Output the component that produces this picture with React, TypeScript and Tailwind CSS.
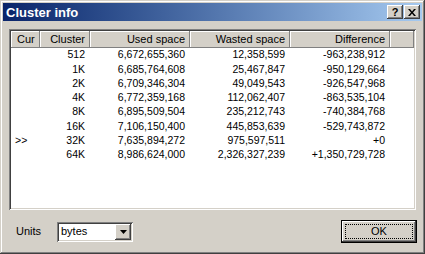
const rows = [
  { cur: "", cluster: "512", used: "6,672,655,360", wasted: "12,358,599", diff: "-963,238,912" },
  { cur: "", cluster: "1K", used: "6,685,764,608", wasted: "25,467,847", diff: "-950,129,664" },
  { cur: "", cluster: "2K", used: "6,709,346,304", wasted: "49,049,543", diff: "-926,547,968" },
  { cur: "", cluster: "4K", used: "6,772,359,168", wasted: "112,062,407", diff: "-863,535,104" },
  { cur: "", cluster: "8K", used: "6,895,509,504", wasted: "235,212,743", diff: "-740,384,768" },
  { cur: "", cluster: "16K", used: "7,106,150,400", wasted: "445,853,639", diff: "-529,743,872" },
  { cur: ">>", cluster: "32K", used: "7,635,894,272", wasted: "975,597,511", diff: "+0" },
  { cur: "", cluster: "64K", used: "8,986,624,000", wasted: "2,326,327,239", diff: "+1,350,729,728" },
];

const raised =
  "shadow-[inset_-1px_-1px_#404040,inset_1px_1px_#ffffff,inset_-2px_-2px_#808080,inset_2px_2px_#d4d0c8]";

const HeaderCell = ({ w, label, left }: { w: string; label: string; left?: boolean }) => (
  <div
    className={`${w} h-full flex items-center ${left ? "justify-start pl-[6px]" : "justify-end pr-[5px]"} bg-[#d4d0c8] shadow-[inset_-1px_-1px_#808080,inset_1px_1px_#ffffff]`}
  >
    {label}
  </div>
);

const App = () => {
  return (
    <div
      className="w-[425px] h-[254px] bg-[#d4d0c8] p-[3px] flex flex-col shadow-[inset_-1px_-1px_#404040,inset_1px_1px_#d4d0c8,inset_-2px_-2px_#808080,inset_2px_2px_#ffffff] text-black"
      style={{ fontFamily: '"Liberation Sans", Arial, sans-serif' }}
    >
      {/* title bar */}
      <div className="h-[18px] flex items-center justify-between pl-[3px] pr-[2px] bg-gradient-to-r from-[#0a246a] to-[#a6caf0]">
        <div className="text-white font-bold text-[13px] leading-none">Cluster info</div>
        <div className="flex gap-[1px]">
          <div className={`w-[16px] h-[14px] bg-[#d4d0c8] ${raised} flex items-center justify-center text-[11px] font-bold leading-none`}>
            ?
          </div>
          <div className={`w-[16px] h-[14px] bg-[#d4d0c8] ${raised} flex items-center justify-center`}>
            <svg width="8" height="7" viewBox="0 0 8 7">
              <path d="M0 0h2l2 2.5L6 0h2L5 3.5 8 7H6L4 4.5 2 7H0l3-3.5z" fill="#000" />
            </svg>
          </div>
        </div>
      </div>

      {/* list view */}
      <div className="mt-[8px] ml-[6px] w-[407px] h-[181px] bg-white p-[2px] shadow-[inset_1px_1px_#808080,inset_-1px_-1px_#ffffff,inset_2px_2px_#404040,inset_-2px_-2px_#d4d0c8] flex flex-col text-[11px]">
        <div className="h-[17px] flex shrink-0">
          <HeaderCell w="w-[29px]" label="Cur" left />
          <HeaderCell w="w-[50px]" label="Cluster" />
          <HeaderCell w="w-[100px]" label="Used space" />
          <HeaderCell w="w-[100px]" label="Wasted space" />
          <HeaderCell w="w-[100px]" label="Difference" />
          <HeaderCell w="flex-1" label="" />
        </div>
        <div className="flex flex-col text-[10.5px]">
          {rows.map((r) => (
            <div key={r.cluster} className="h-[14.3px] flex items-center">
              <div className="w-[29px] pl-[4px]">{r.cur}</div>
              <div className="w-[50px] text-right pr-[5px]">{r.cluster}</div>
              <div className="w-[100px] text-right pr-[5px]">{r.used}</div>
              <div className="w-[100px] text-right pr-[5px]">{r.wasted}</div>
              <div className="w-[100px] text-right pr-[5px]">{r.diff}</div>
            </div>
          ))}
        </div>
      </div>

      {/* bottom row */}
      <div className="flex items-center mt-[10px] ml-[13px]">
        <div className="text-[11px] w-[41px]">Units</div>
        <div className="w-[76px] h-[20px] bg-white p-[2px] flex items-center shadow-[inset_1px_1px_#808080,inset_-1px_-1px_#ffffff,inset_2px_2px_#404040,inset_-2px_-2px_#d4d0c8]">
          <div className="flex-1 pl-[2px] text-[11px]">bytes</div>
          <div className={`w-[16px] h-[16px] bg-[#d4d0c8] ${raised} flex items-center justify-center`}>
            <svg width="7" height="4" viewBox="0 0 7 4">
              <path d="M0 0h7L3.5 4z" fill="#000" />
            </svg>
          </div>
        </div>
        <div className="ml-auto mr-[5px] w-[76px] h-[23px] border border-black bg-[#d4d0c8] p-[3px] shadow-[inset_-1px_-1px_#404040,inset_1px_1px_#ffffff,inset_-2px_-2px_#808080]">
          <div className="w-full h-full border border-dotted border-black flex items-center justify-center text-[11px]">
            OK
          </div>
        </div>
      </div>
    </div>
  );
};

export default App;
